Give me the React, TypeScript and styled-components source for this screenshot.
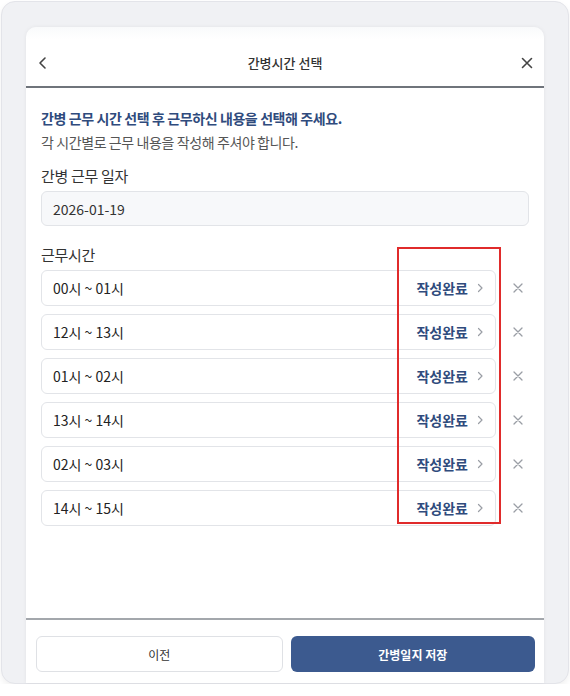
import React from 'react';
import styled, { createGlobalStyle } from 'styled-components';

const slots = ['00시 ~ 01시', '12시 ~ 13시', '01시 ~ 02시', '13시 ~ 14시', '02시 ~ 03시', '14시 ~ 15시'];

const App = () => {
  return (
    <>
      <GlobalStyle />
      <Frame>
        <Card>
          <Header>
            <IconButton aria-label="back">
              <svg width="14" height="14" viewBox="0 0 14 14" fill="none">
                <path d="M9 2 L4 7 L9 12" stroke="#444" strokeWidth="1.6" strokeLinecap="round" strokeLinejoin="round" />
              </svg>
            </IconButton>
            <HeaderTitle>간병시간 선택</HeaderTitle>
            <IconButton aria-label="close">
              <svg width="14" height="14" viewBox="0 0 14 14" fill="none">
                <path d="M2.5 2.5 L11.5 11.5 M11.5 2.5 L2.5 11.5" stroke="#444" strokeWidth="1.6" strokeLinecap="round" />
              </svg>
            </IconButton>
          </Header>
          <Content>
            <Notice>간병 근무 시간 선택 후 근무하신 내용을 선택해 주세요.</Notice>
            <SubNotice>각 시간별로 근무 내용을 작성해 주셔야 합니다.</SubNotice>
            <Label>간병 근무 일자</Label>
            <DateBox>2026-01-19</DateBox>
            <Label $top={18}>근무시간</Label>
            <SlotList>
              {slots.map((s) => (
                <SlotRow key={s}>
                  <SlotItem>
                    <span>{s}</span>
                    <Status>
                      작성완료
                      <svg width="10" height="10" viewBox="0 0 10 10" fill="none">
                        <path d="M3.5 1.5 L7 5 L3.5 8.5" stroke="#9a9ea5" strokeWidth="1.2" strokeLinecap="round" strokeLinejoin="round" />
                      </svg>
                    </Status>
                  </SlotItem>
                  <RemoveButton aria-label="remove">
                    <svg width="10" height="10" viewBox="0 0 10 10" fill="none">
                      <path d="M1 1 L9 9 M9 1 L1 9" stroke="#9a9ea5" strokeWidth="1.3" strokeLinecap="round" />
                    </svg>
                  </RemoveButton>
                </SlotRow>
              ))}
              <Highlight />
            </SlotList>
          </Content>
          <Footer>
            <SecondaryButton>이전</SecondaryButton>
            <PrimaryButton>간병일지 저장</PrimaryButton>
          </Footer>
        </Card>
      </Frame>
    </>
  );
};

const GlobalStyle = createGlobalStyle`
  body {
    margin: 0;
    background: #fff;
    font-family: "Noto Sans CJK KR", "Noto Sans", sans-serif;
  }
`;

const Frame = styled.div`
  box-sizing: border-box;
  width: 568px;
  height: 683px;
  margin: 1px 0 0 1px;
  padding: 25px 24px 0 24px;
  background: #f0f1f4;
  border: 1px solid #e3e4e9;
  border-radius: 14px;
  box-shadow: 0 3px 6px rgba(0, 0, 0, 0.06);
  display: flex;
`;

const Card = styled.div`
  flex: 1;
  display: flex;
  flex-direction: column;
  border-radius: 10px 10px 0 0;
  padding-top: 12px;
  background: linear-gradient(#f9fafb 0, #fff 12px);
  box-shadow: 0 0 4px rgba(0, 0, 0, 0.06);
`;

const Header = styled.div`
  height: 47px;
  display: flex;
  align-items: center;
  justify-content: space-between;
  padding: 0 9px;
  border-bottom: 2px solid #6f747b;
`;

const IconButton = styled.button`
  width: 16px;
  height: 16px;
  padding: 0;
  border: none;
  background: none;
  display: flex;
  align-items: center;
  justify-content: center;
`;

const HeaderTitle = styled.h1`
  margin: 0;
  font-size: 13px;
  font-weight: 500;
  color: #333;
`;

const Content = styled.div`
  flex: 1;
  padding: 19px 15px 0;
`;

const Notice = styled.p`
  margin: 0;
  font-size: 14px;
  line-height: 22px;
  letter-spacing: -0.4px;
  font-weight: 700;
  color: #2f4b7d;
`;

const SubNotice = styled.p`
  margin: 2px 0 0;
  font-size: 14px;
  line-height: 22px;
  letter-spacing: -0.4px;
  color: #555;
`;

const Label = styled.div<{ $top?: number }>`
  margin-top: ${(p) => p.$top ?? 12}px;
  font-size: 15px;
  line-height: 22px;
  letter-spacing: -0.3px;
  color: #333;
`;

const DateBox = styled.div`
  margin-top: 4px;
  box-sizing: border-box;
  height: 35px;
  padding: 0 11px;
  display: flex;
  align-items: center;
  background: #f7f8fa;
  border: 1px solid #e2e4e8;
  border-radius: 6px;
  font-size: 14px;
  color: #333;
`;

const SlotList = styled.div`
  position: relative;
  margin-top: 4px;
  display: flex;
  flex-direction: column;
  gap: 8px;
`;

const SlotRow = styled.div`
  display: flex;
  align-items: center;
  gap: 10px;
`;

const SlotItem = styled.div`
  flex: 1;
  box-sizing: border-box;
  height: 36px;
  padding: 0 10px 0 11px;
  display: flex;
  align-items: center;
  justify-content: space-between;
  border: 1px solid #e2e4e8;
  border-radius: 6px;
  font-size: 14px;
  color: #222;
`;

const Status = styled.span`
  display: flex;
  align-items: center;
  gap: 7px;
  font-weight: 700;
  color: #2f4b7d;
`;

const RemoveButton = styled.button`
  width: 23px;
  height: 22px;
  padding: 0;
  border: none;
  background: none;
  display: flex;
  align-items: center;
  justify-content: center;
`;

const Highlight = styled.div`
  position: absolute;
  left: 356px;
  top: -23px;
  width: 104px;
  height: 277px;
  box-sizing: border-box;
  border: 2px solid #e02b2b;
  pointer-events: none;
`;

const Footer = styled.div`
  display: flex;
  gap: 8px;
  padding: 16px 9px 11px 10px;
  border-top: 2px solid #a3a7ac;
`;

const SecondaryButton = styled.button`
  flex: 1;
  height: 36px;
  background: #fff;
  border: 1px solid #dfe1e5;
  border-radius: 6px;
  font-family: inherit;
  font-size: 12px;
  color: #333;
`;

const PrimaryButton = styled.button`
  flex: 1;
  height: 36px;
  background: #3c5a8f;
  border: none;
  border-radius: 6px;
  font-family: inherit;
  font-size: 12px;
  font-weight: 700;
  color: #fff;
`;

export default App;
